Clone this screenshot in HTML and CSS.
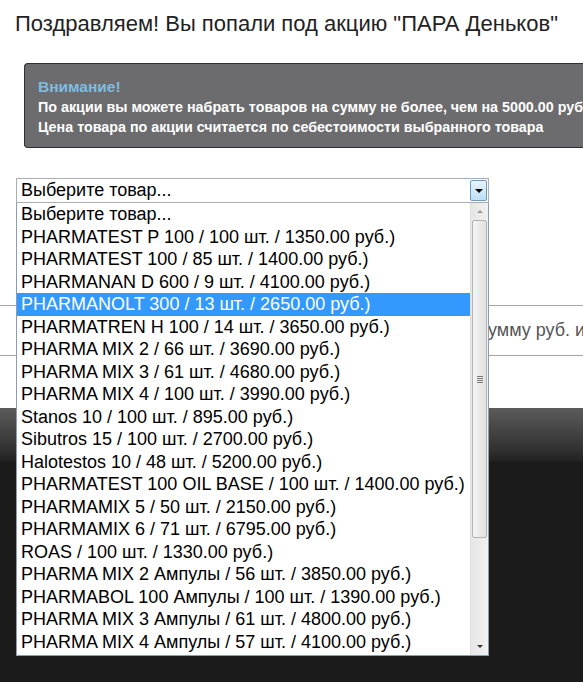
FILE: index.html
```html
<!DOCTYPE html>
<html lang="ru">
  <head>
    <meta charset="utf-8">
    <title>Акция ПАРА Деньков</title>
    <link rel="stylesheet" href="styles.css">
  </head>
  <body>

  <h1 class="promo-title">Поздравляем! Вы попали под акцию "ПАРА Деньков"</h1>

  <div class="alert">
    <div class="alert-head">Внимание!</div>
    <div>По акции вы можете набрать товаров на сумму не более, чем на 5000.00 руб.</div>
    <div>Цена товара по акции считается по себестоимости выбранного товара</div>
  </div>

  <div class="order">
    <div class="select">
      <span class="select-value">Выберите товар...</span>
      <span class="select-btn"><span class="arrow-down"></span></span>
    </div>

    <div class="sum-row">
      <span class="sum-text">сумму руб. из 5000.00 руб.</span>
    </div>

    <!-- opened list of the select -->
    <div class="dropdown">
      <ul class="options">
        <li>Выберите товар...</li>
        <li>PHARMATEST P 100 / 100 шт. / 1350.00 руб.)</li>
        <li>PHARMATEST 100 / 85 шт. / 1400.00 руб.)</li>
        <li>PHARMANAN D 600 / 9 шт. / 4100.00 руб.)</li>
        <li class="active">PHARMANOLT 300 / 13 шт. / 2650.00 руб.)</li>
        <li>PHARMATREN H 100 / 14 шт. / 3650.00 руб.)</li>
        <li>PHARMA MIX 2 / 66 шт. / 3690.00 руб.)</li>
        <li>PHARMA MIX 3 / 61 шт. / 4680.00 руб.)</li>
        <li>PHARMA MIX 4 / 100 шт. / 3990.00 руб.)</li>
        <li>Stanos 10 / 100 шт. / 895.00 руб.)</li>
        <li>Sibutros 15 / 100 шт. / 2700.00 руб.)</li>
        <li>Halotestos 10 / 48 шт. / 5200.00 руб.)</li>
        <li>PHARMATEST 100 OIL BASE / 100 шт. / 1400.00 руб.)</li>
        <li>PHARMAMIX 5 / 50 шт. / 2150.00 руб.)</li>
        <li>PHARMAMIX 6 / 71 шт. / 6795.00 руб.)</li>
        <li>ROAS / 100 шт. / 1330.00 руб.)</li>
        <li>PHARMA MIX 2 Ампулы / 56 шт. / 3850.00 руб.)</li>
        <li>PHARMABOL 100 Ампулы / 100 шт. / 1390.00 руб.)</li>
        <li>PHARMA MIX 3 Ампулы / 61 шт. / 4800.00 руб.)</li>
        <li>PHARMA MIX 4 Ампулы / 57 шт. / 4100.00 руб.)</li>
      </ul>
      <div class="scrollbar">
        <span class="sb-btn"><span class="sb-up"></span></span>
        <span class="sb-thumb"><span class="grip"></span></span>
        <span class="sb-track"></span>
        <span class="sb-btn"><span class="sb-down"></span></span>
      </div>
    </div>
  </div>

  <div class="footer"></div>

  </body>
</html>
```

FILE: styles.css
```css
html, body {
  margin: 0;
  height: 100%;
  overflow: hidden;
}

body {
  background-color: #fff;
  font-family: "Liberation Sans", Arial, sans-serif;
  color: #222;
}

.promo-title {
  margin: 0;
  padding: 11px 0 0 15px;
  font-size: 22px;
  font-weight: normal;
  line-height: 26px;
  color: #222;
  white-space: nowrap;
}

.alert {
  width: 600px;
  height: 60px;
  margin: 26px 0 0 24px;
  padding: 13px 13px 10px 13px;
  background-color: #6c6c6e;
  border: 1px solid #2f2f2f;
  border-right: none;
  border-radius: 4px 0 0 4px;
  color: #fff;
  font-size: 14.3px;
  font-weight: bold;
  line-height: 20px;
  white-space: nowrap;
}

.alert-head {
  color: #7ebde2;
  font-size: 15.5px;
}

.order {
  position: relative;
  padding: 30px 0 0 16px;
}

.select {
  display: flex;
  align-items: center;
  justify-content: space-between;
  box-sizing: border-box;
  width: 473px;
  height: 25px;
  padding: 0 1px 0 4px;
  border: 1px solid #a7aeb7;
  background-color: #fff;
  font-size: 18px;
  color: #000;
}

.select-btn {
  display: flex;
  align-items: center;
  justify-content: center;
  box-sizing: border-box;
  width: 17px;
  height: 21px;
  border: 1px solid #6f9ac0;
  border-radius: 2px;
  background: linear-gradient(#e7f4fd, #bddff6);
}

.arrow-down {
  width: 0;
  height: 0;
  border-left: 4px solid transparent;
  border-right: 4px solid transparent;
  border-top: 4px solid #000;
}

.sum-row {
  display: flex;
  align-items: center;
  height: 49px;
  margin: 102px 0 0 -16px;
  padding-left: 479px;
  border-top: 1px solid #a4a4a4;
  border-bottom: 1px solid #a4a4a4;
  font-size: 18px;
  color: #555;
  white-space: nowrap;
}

.dropdown {
  position: absolute;
  top: 55px;
  left: 16px;
  display: flex;
  box-sizing: border-box;
  width: 473px;
  height: 453px;
  border: 1px solid #8b9db4;
  border-top: none;
  background-color: #fff;
}

.options {
  flex: 1;
  list-style: none;
  margin: 0;
  padding: 0;
  font-size: 18px;
  color: #000;
}

.options li {
  height: 22.5px;
  line-height: 22.5px;
  padding-left: 4px;
  white-space: nowrap;
}

.options li.active {
  background-color: #3399ff;
  color: #fff;
}

.scrollbar {
  display: flex;
  flex-direction: column;
  width: 17px;
  background: linear-gradient(to right, #e6e6e6, #f1f1f1);
  border-left: 1px solid #e0e0e0;
}

.sb-btn {
  display: flex;
  align-items: center;
  justify-content: center;
  height: 17px;
}

.sb-up,
.sb-down {
  width: 0;
  height: 0;
  border-left: 3px solid transparent;
  border-right: 3px solid transparent;
}

.sb-up {
  border-bottom: 3px solid #9a9a9a;
}

.sb-down {
  border-top: 3px solid #333;
}

.sb-thumb {
  display: flex;
  align-items: center;
  justify-content: center;
  box-sizing: border-box;
  height: 318px;
  margin: 0 1px;
  border: 1px solid #b3b3b3;
  border-radius: 2px;
  background: linear-gradient(to right, #f4f4f4, #e2e2e2);
}

.grip {
  width: 6px;
  height: 7px;
  background: repeating-linear-gradient(#7a7a7a 0 1px, transparent 1px 2px);
}

.sb-track {
  flex: 1;
}

.footer {
  height: 275px;
  margin-top: 52px;
  background: linear-gradient(#5b5b5b 0, #333 40px, #222 53px, #1b1b1b 54px);
}
```
